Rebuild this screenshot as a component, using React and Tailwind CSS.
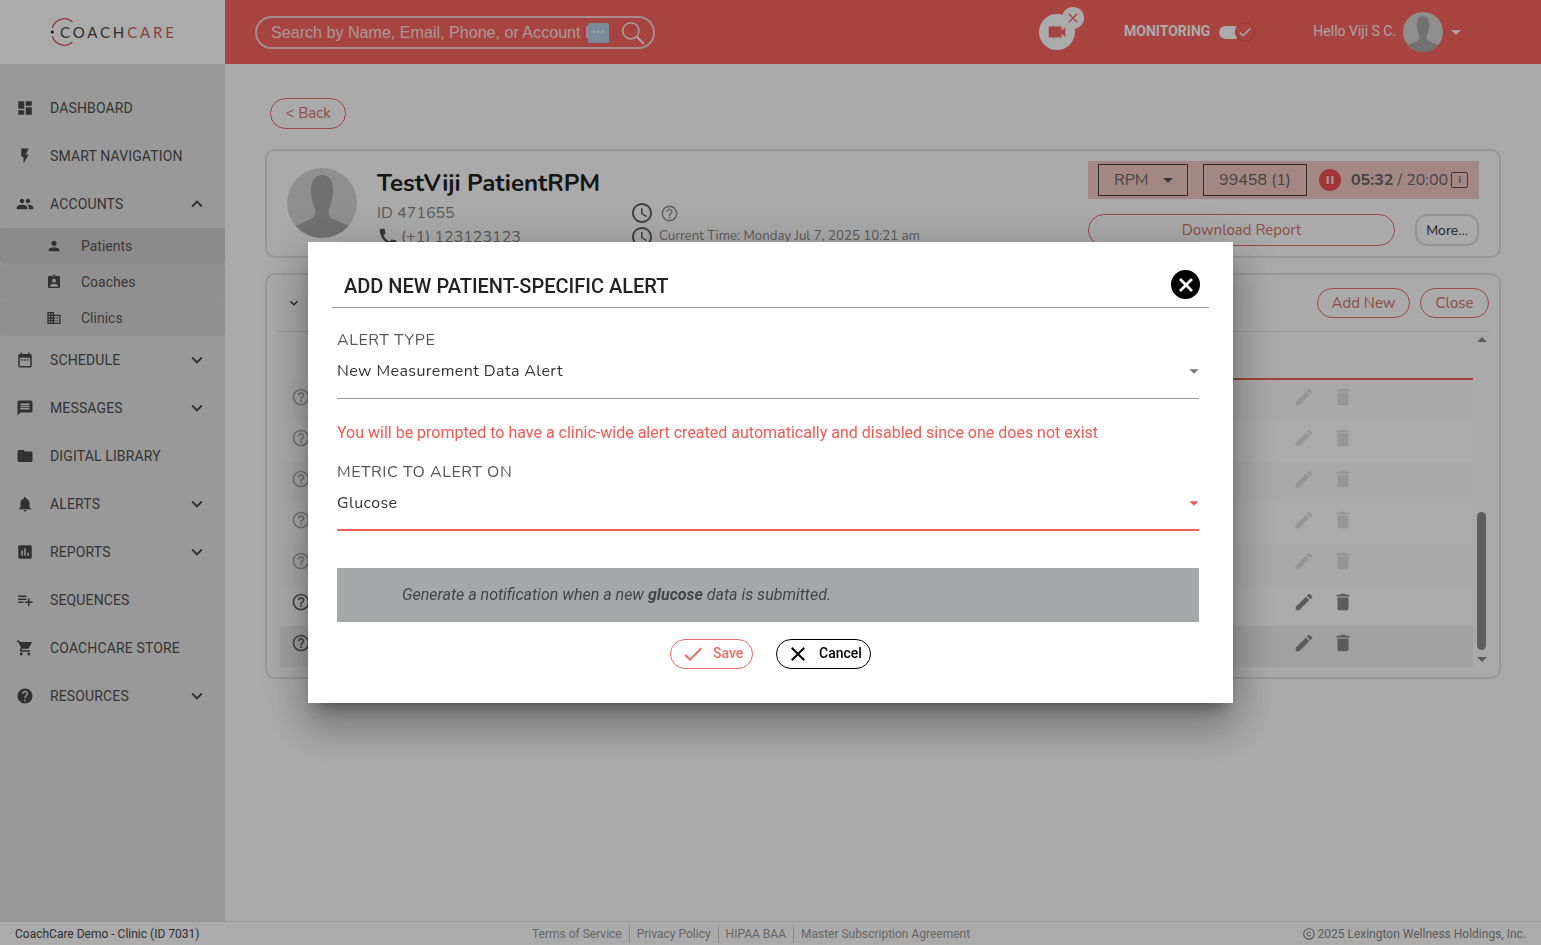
import React from "react";
import {
  MdDashboard, MdFlashOn, MdPeople, MdPerson, MdAssignmentInd, MdDomain, MdDateRange, MdMessage, MdFolder,
  MdNotifications, MdAssessment, MdPlaylistAdd, MdShoppingCart, MdHelp, MdExpandMore, MdExpandLess, MdEdit,
  MdDelete, MdAccessTime, MdHelpOutline, MdCall, MdVideocam, MdClose, MdCheck, MdPause, MdArrowDropDown, MdCopyright,
  MdArrowDropUp,
} from "react-icons/md";

const NUN = "font-['Nunito','Noto_Sans',sans-serif]";

function Silhouette({ className }) {
  return (
    <svg viewBox="0 0 70 70" className={className}>
      <circle cx="35" cy="35" r="35" fill="#d6d6d6" />
      <clipPath id="c"><circle cx="35" cy="35" r="35" /></clipPath>
      <g clipPath="url(#c)" fill="#a9a9a9">
        <path d="M35 7c-7 0-11 6-11 15 0 8 2 14 4 18 1 4 0 8-2 10L4 60v14h62V60L44 50c-2-2-3-6-2-10 2-4 4-10 4-18 0-9-4-15-11-15z" />
      </g>
    </svg>
  );
}

function Logo() {
  return (
    <div className="flex items-center relative pl-[60px] h-full w-full">
      <svg viewBox="0 0 32 32" className="absolute left-[49px] top-[17px] w-[30px] h-[30px]" fill="none">
        <path d="M25 5 A13.5 13.5 0 0 0 3.5 11.5" stroke="#c4504c" strokeWidth="1.3" />
        <path d="M3.5 20.5 A13.5 13.5 0 0 0 25 27" stroke="#c4504c" strokeWidth="1.3" />
        <circle cx="3.5" cy="16" r="1.6" fill="#222" />
      </svg>
      <span className="font-['Lato',sans-serif] text-[15px] tracking-[2.85px] text-[#444]">COACH<span className="text-[#c9625e]">CARE</span></span>
    </div>
  );
}

const nav = [
  { l: "DASHBOARD", I: MdDashboard },
  { l: "SMART NAVIGATION", I: MdFlashOn },
  { l: "ACCOUNTS", I: MdPeople, up: true },
  { sub: true },
  { l: "SCHEDULE", I: MdDateRange, c: true },
  { l: "MESSAGES", I: MdMessage, c: true },
  { l: "DIGITAL LIBRARY", I: MdFolder },
  { l: "ALERTS", I: MdNotifications, c: true },
  { l: "REPORTS", I: MdAssessment, c: true },
  { l: "SEQUENCES", I: MdPlaylistAdd },
  { l: "COACHCARE STORE", I: MdShoppingCart },
  { l: "RESOURCES", I: MdHelp, c: true },
];

function Sidebar() {
  return (
    <aside className="w-[225px] shrink-0 bg-[#e5e5e5] pt-5 font-['Roboto',sans-serif] text-[14px] text-[#4e4e4e]">
      {nav.map((n, i) =>
        n.sub ? (
          <div key={i} className="flex flex-col">
            {[["Patients", MdPerson, "bg-[#cfcfcf]"], ["Coaches", MdAssignmentInd, "bg-[#d7d7d7]"], ["Clinics", MdDomain, "bg-[#d7d7d7]"]].map(([t, I, bg]) => (
              <div key={t} className={`h-9 flex items-center pl-[46px] rounded-[3px] ${bg}`}>
                <I className="w-4 h-4 text-[#4a4a4a]" />
                <span className="ml-[19px] text-[#555]">{t}</span>
              </div>
            ))}
          </div>
        ) : (
          <div key={i} className="h-12 flex items-center pl-4 pr-[17px]">
            <n.I className="w-[18px] h-[18px] text-[#4a4a4a]" />
            <span className="ml-4 tracking-[0.14px]">{n.l}</span>
            {n.c && <MdExpandMore className="ml-auto w-[22px] h-[22px] text-[#4a4a4a]" />}
            {n.up && <MdExpandLess className="ml-auto w-[22px] h-[22px] text-[#4a4a4a]" />}
          </div>
        )
      )}
    </aside>
  );
}

function Header() {
  return (
    <header className="h-16 shrink-0 flex bg-[#f96660] font-['Roboto',sans-serif] text-white">
      <div className="w-[225px] h-full bg-white"><Logo /></div>
      <div className="ml-[30px] mt-4 w-[400px] h-[33px] rounded-full border-2 border-[#fbd0ce] flex items-center pl-[14px] relative">
        <span className="font-['Liberation_Sans',sans-serif] text-[16.1px] text-white/80 w-[317px] overflow-hidden whitespace-nowrap">Search by Name, Email, Phone, or Account ID</span>
        <span className="w-[21px] h-[20px] bg-[#b9cfe6] rounded-[2px] flex items-center justify-center text-[9px] leading-none font-bold tracking-[1px]">•••</span>
        <svg viewBox="0 0 24 24" className="ml-[11px] w-[26px] h-[26px]" fill="none" stroke="#fff" strokeOpacity="0.9" strokeWidth="1.4">
          <circle cx="10" cy="10" r="7.5" />
          <path d="M15.5 15.5 L22 22" strokeWidth="2" />
        </svg>
      </div>
      <div className="ml-[384px] mt-[14px] w-9 h-9 rounded-full bg-white flex items-center justify-center relative">
        <MdVideocam className="w-[22px] h-[22px] text-[#f96660]" />
        <span className="absolute left-[23px] top-[-7px] w-[22px] h-[22px] rounded-full bg-white flex items-center justify-center">
          <MdClose className="w-4 h-4 text-[#f96660]" />
        </span>
      </div>
      <span className="ml-[49px] mt-[22px] h-[18px] text-[14px] leading-[18px] font-bold text-white">MONITORING</span>
      <div className="ml-[9px] mt-[21px] relative w-[36px] h-[22px] flex items-center">
        <span className="w-[22px] h-[13px] rounded-full bg-white" />
        <span className="absolute left-[16px] top-[1px] w-[20px] h-[20px] rounded-full border border-[#d94f4a] bg-[#f96660] flex items-center justify-center">
          <MdCheck className="w-4 h-4 text-white" />
        </span>
      </div>
      <span className="ml-[58px] mt-[22px] h-[18px] text-[14px] leading-[18px] text-white/90">Hello Viji S C.</span>
      <Silhouette className="ml-[7px] mt-3 w-10 h-10" />
      <MdArrowDropDown className="ml-[1px] mt-[20px] w-6 h-6 text-white/90" />
    </header>
  );
}

function PatientCard() {
  return (
    <section className={`ml-10 mt-5 w-[1236px] h-[109px] shrink-0 border-2 border-[#e3e3e3] rounded-[10px] flex overflow-hidden ${NUN}`}>
      <Silhouette className="ml-5 mt-[17px] w-[70px] h-[70px] shrink-0" />
      <div className="ml-5 w-[253px] pt-[17px] shrink-0">
        <div className="text-[24px] leading-[30px] font-bold text-[#222] whitespace-nowrap">TestViji PatientRPM</div>
        <div className="mt-[3px] text-[16px] leading-[24px] text-[#888]">ID 471655</div>
        <div className="flex items-center text-[16px] leading-[24px] text-[#888]"><MdCall className="w-[22px] h-[22px] text-[#555]" /><span className="ml-[2px]">(+1) 123123123</span></div>
      </div>
      <div className="pt-[50px]">
        <div className="flex items-center gap-[6px] h-6">
          <MdAccessTime className="w-6 h-6 text-[#666]" />
          <MdHelpOutline className="w-[19px] h-[19px] text-[#999]" />
        </div>
        <div className="flex items-center gap-[5px] h-6 text-[13.25px] text-[#888] whitespace-nowrap">
          <MdAccessTime className="w-6 h-6 text-[#666]" />
          <span>Current Time: Monday Jul 7, 2025 10:21 am</span>
        </div>
      </div>
      <div className="ml-auto mr-5 mt-[10px] w-[391px] shrink-0">
        <div className="h-[38px] bg-[#f2c9c7] flex items-center pl-[10px] text-[#666] text-[16px]">
          <div className="w-[90px] h-8 border border-[#444] flex items-center pl-[15px]">RPM<MdArrowDropDown className="ml-[7px] w-6 h-6 text-[#555]" /></div>
          <div className="ml-[15px] w-[104px] h-8 border border-[#444] flex items-center justify-center">99458 (1)</div>
          <span className="ml-3 w-[22px] h-[22px] rounded-full bg-[#f0504a] flex items-center justify-center"><MdPause className="w-[14px] h-[14px] text-white/80" /></span>
          <span className="ml-[10px] text-[16px] whitespace-nowrap"><b className="font-bold">05:32</b> / 20:00</span>
          <span className="ml-[3px] w-[17px] h-[16px] border border-[#555] rounded-[2px] flex items-center justify-center text-[10px] leading-none font-bold">i</span>
        </div>
        <div className="mt-[15px] flex">
          <button className="w-[307px] h-8 rounded-full border border-[#e86a65] text-[#d5716d] text-[15px]">Download Report</button>
          <button className="ml-5 w-16 h-8 rounded-[12px] border-2 border-[#ddd] text-[#333] text-[14px]">More...</button>
        </div>
      </div>
    </section>
  );
}

const rows = ["bg-[#fcfcfc]", "bg-white", "bg-[#fcfcfc]", "bg-white", "bg-[#fcfcfc]", "bg-white", "bg-[#f0f0f0]"];

function TableCard() {
  return (
    <section className={`ml-10 mt-[15px] w-[1236px] h-[406px] shrink-0 border-2 border-[#e3e3e3] rounded-[10px] px-[10px] overflow-hidden ${NUN}`}>
      <div className="h-[57px] border-b border-[#e3e3e3] flex items-start pt-[13px]">
        <MdExpandMore className="ml-[9px] mt-[7px] w-4 h-4 text-[#333]" />
        <button className="ml-auto w-[93px] h-[30px] rounded-full border border-[#e86a65] text-[#d5716d] text-[15px]">Add New</button>
        <button className="ml-[10px] w-[69px] h-[30px] rounded-full border border-[#e86a65] text-[#d5716d] text-[15px]">Close</button>
      </div>
      <div className="flex">
        <div className="w-[1197px]">
          <div className="h-12 ml-10 border-b-2 border-[#f0605a]" />
          {rows.map((b, i) => (
            <div key={i} className={`h-[41px] ml-[3px] flex items-start pt-[6px] pl-[11px] pr-[119px] ${b}`}>
              <MdHelpOutline className={`mt-[1px] w-5 h-5 text-[#666] ${i < 5 ? "opacity-50" : ""}`} />
              <div className={`ml-auto flex items-center gap-[17px] ${i < 5 ? "opacity-25" : ""}`}>
                <MdEdit className="w-[22px] h-[22px] text-[#888]" />
                <MdDelete className="w-[22px] h-[22px] text-[#888]" />
              </div>
            </div>
          ))}
        </div>
        <div className="w-[15px] ml-[1px] flex flex-col items-center relative">
          <MdArrowDropUp className="absolute top-[-4px] w-6 h-6 text-[#888]" />
          <div className="absolute top-[180px] w-[9px] h-[138px] rounded-full bg-[#8c8c8c]" />
          <MdArrowDropDown className="absolute top-[315px] w-6 h-6 text-[#888]" />
        </div>
      </div>
    </section>
  );
}

function Modal() {
  const label = `${NUN} text-[16px] leading-6 tracking-[0.55px] text-[#555]`;
  const value = `${NUN} text-[16px] leading-6 tracking-[0.4px] text-[#333]`;
  return (
    <div className="fixed inset-0 bg-black/[.33] flex items-center justify-center">
      <div className="w-[925px] bg-white px-6 pb-[34px] font-['Roboto',sans-serif] shadow-[0_11px_15px_-7px_rgba(0,0,0,.35),0_24px_38px_3px_rgba(0,0,0,.2),0_9px_46px_8px_rgba(0,0,0,.15)]">
        <div className="h-[66px] border-b border-[#999] flex items-end pb-[7px] pl-3 relative">
          <h2 className="text-[20px] leading-7 font-medium text-[#222]">ADD NEW PATIENT-SPECIFIC ALERT</h2>
          <button className="absolute right-[9px] top-[28px] w-[29px] h-[29px] rounded-full bg-black flex items-center justify-center">
            <svg viewBox="0 0 16 16" className="w-4 h-4" fill="none" stroke="#fff" strokeWidth="2.8">
              <path d="M2 2 L14 14 M14 2 L2 14" />
            </svg>
          </button>
        </div>
        <div className="pl-[5px] pr-[10px]">
          <div className={`mt-5 ${label}`}>ALERT TYPE</div>
          <div className="mt-[7px] h-10 border-b border-[#999] flex items-start justify-between">
            <span className={value}>New Measurement Data Alert</span>
            <MdArrowDropDown className="mt-[1px] w-[22px] h-[22px] -mr-[6px] text-[#777]" />
          </div>
          <p className="mt-[22px] text-[16px] leading-6 text-[#ef5a54]">You will be prompted to have a clinic-wide alert created automatically and disabled since one does not exist</p>
          <div className={`mt-[15px] ${label}`}>METRIC TO ALERT ON</div>
          <div className="mt-[7px] h-10 border-b-2 border-[#f0605a] flex items-start justify-between">
            <span className={value}>Glucose</span>
            <MdArrowDropDown className="mt-[1px] w-[22px] h-[22px] -mr-[6px] text-[#ef5a54]" />
          </div>
          <div className="mt-[37px] h-[54px] bg-[#a6a7a9] flex items-center pl-[65px] text-[16px] italic text-[#444]">
            <span>Generate a notification when a new <b className="font-bold">glucose</b> data is submitted.</span>
          </div>
          <div className="mt-[17px] -mr-[5px] flex justify-center gap-[23px]">
            <button className="w-[83px] h-[30px] rounded-full border border-[#e86a65] flex items-center pl-[10px] pb-[1px] text-[#ef6a64] text-[14px] font-medium">
              <MdCheck className="w-6 h-6 text-[#ef6a64]" /><span className="ml-[8px]">Save</span>
            </button>
            <button className="w-[95px] h-[30px] rounded-full border border-black flex items-center pl-[9px] pb-[1px] text-black text-[14px] font-medium">
              <MdClose className="w-6 h-6" /><span className="ml-[9px]">Cancel</span>
            </button>
          </div>
        </div>
      </div>
    </div>
  );
}

function Footer() {
  return (
    <footer className="h-6 shrink-0 bg-white border-t border-[#e0e0e0] flex items-center font-['Roboto',sans-serif] text-[12px]">
      <span className="w-[532px] pl-[15px] text-[#4a4a4a]">CoachCare Demo - Clinic (ID 7031)</span>
      <div className="flex items-center text-[#999]">
        <span className="pr-[7px] border-r border-[#ccc]">Terms of Service</span>
        <span className="px-[7px] border-r border-[#ccc]">Privacy Policy</span>
        <span className="px-[7px] border-r border-[#ccc]">HIPAA BAA</span>
        <span className="pl-[7px]">Master Subscription Agreement</span>
      </div>
      <span className="ml-auto pr-[15px] flex items-center text-[#888]"><MdCopyright className="w-[14px] h-[14px] mr-[1px]" />2025 Lexington Wellness Holdings, Inc.</span>
    </footer>
  );
}

export default function App() {
  return (
    <div className="h-screen flex flex-col overflow-hidden bg-white">
      <Header />
      <div className="flex-1 flex min-h-0">
        <Sidebar />
        <main className="flex-1 flex flex-col pt-[34px] bg-[#fefefe] min-w-0">
          <button className={`ml-[45px] w-[76px] h-[31px] shrink-0 rounded-full border border-[#e86a65] text-[#d5716d] text-[15px] ${NUN}`}>&lt; Back</button>
          <PatientCard />
          <TableCard />
        </main>
      </div>
      <Footer />
      <Modal />
    </div>
  );
}
